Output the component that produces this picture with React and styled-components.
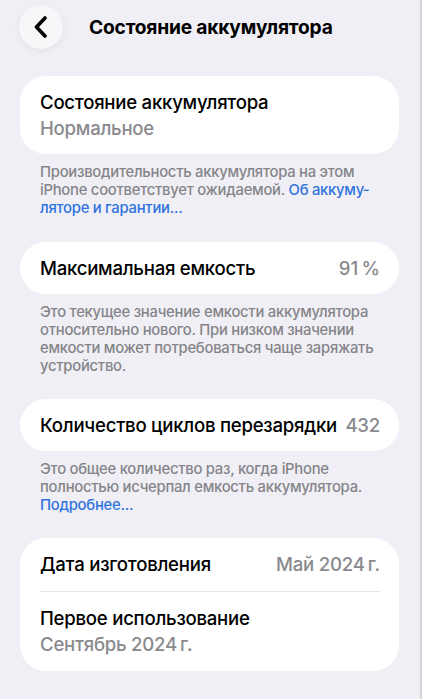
import React from 'react';
import styled, { createGlobalStyle } from 'styled-components';

const GlobalStyle = createGlobalStyle`
	html, body {
		margin: 0;
		padding: 0;
		background: #f0eff5;
	}
	body {
		font-family: Inter, 'Noto Sans', sans-serif;
		-webkit-font-smoothing: antialiased;
	}
`;

const Page = styled.div`
	width: 422px;
	min-height: 699px;
	box-sizing: border-box;
	padding: 5px 21px 0 20px;
	border-right: 2px solid #d6d6da;
	overflow: hidden;
`;

const Header = styled.header`
	display: flex;
	align-items: center;
	height: 44px;
	gap: 26px;
	margin-left: -1px;
`;

const BackButton = styled.button`
	width: 44px;
	height: 44px;
	border-radius: 50%;
	border: none;
	background: #f7f7fa;
	box-shadow: 0 2px 8px rgba(0, 0, 0, 0.06);
	display: flex;
	align-items: center;
	justify-content: center;
	padding: 0;
`;

const Title = styled.h1`
	margin: 0;
	font-size: 19.2px;
	font-weight: 700;
	color: #000;
	letter-spacing: -0.2px;
`;

const Card = styled.section`
	background: #fff;
	border-radius: 26px;
	padding: 0 19px 0 20px;
	margin-top: ${(p) => p.$top || 0}px;
`;

const Row = styled.div`
	display: flex;
	justify-content: space-between;
	align-items: center;
	height: ${(p) => p.$h || 52}px;
	border-bottom: ${(p) => (p.$divider ? '1px solid #e3e3e7' : 'none')};
`;

const Stack = styled.div`
	display: flex;
	flex-direction: column;
	justify-content: center;
	gap: 3px;
	height: ${(p) => p.$h || 78}px;
`;

const Label = styled.span`
	font-size: 18.6px;
	line-height: 23px;
	font-weight: 450;
	color: #000;
	letter-spacing: -0.25px;
`;

const Value = styled.span`
	font-size: 18.6px;
	line-height: 23px;
	font-weight: 450;
	color: #8a8a8e;
	letter-spacing: -0.25px;
	white-space: nowrap;
`;

const Footer = styled.p`
	margin: 9px 0 0;
	padding: 0 20px;
	font-size: 14.8px;
	line-height: 18px;
	font-weight: 450;
	color: #858589;
	letter-spacing: -0.25px;
`;

const Link = styled.a`
	color: #2f73e0;
	text-decoration: none;
`;

export default function App() {
	return (
		<>
			<GlobalStyle />
			<Page>
				<Header>
					<BackButton aria-label='Назад'>
						<svg width='16' height='22' viewBox='0 0 16 22'>
							<path
								d='M12 2 L3.5 11 L12 20'
								fill='none'
								stroke='#000'
								strokeWidth='3.6'
								strokeLinecap='round'
								strokeLinejoin='round'
							/>
						</svg>
					</BackButton>
					<Title>Состояние аккумулятора</Title>
				</Header>

				<Card $top={27}>
					<Stack $h={78}>
						<Label>Состояние аккумулятора</Label>
						<Value>Нормальное</Value>
					</Stack>
				</Card>
				<Footer>
					Производительность аккумулятора на этом iPhone соответствует
					ожидаемой. <Link href='#'>Об аккуму{'\u00AD'}ляторе и гарантии...</Link>
				</Footer>

				<Card $top={25}>
					<Row>
						<Label>Максимальная емкость</Label>
						<Value>91{'\u202F'}%</Value>
					</Row>
				</Card>
				<Footer>
					Это текущее значение емкости аккумулятора относительно нового.
					При низком значении емкости может потребоваться чаще заряжать
					устройство.
				</Footer>

				<Card $top={24}>
					<Row>
						<Label>Количество циклов перезарядки</Label>
						<Value>432</Value>
					</Row>
				</Card>
				<Footer>
					Это общее количество раз, когда iPhone полностью исчерпал емкость
					аккумулятора. <Link href='#'>Подробнее...</Link>
				</Footer>

				<Card $top={24}>
					<Row $h={53} $divider>
						<Label>Дата изготовления</Label>
						<Value>Май 2024{'\u202F'}г.</Value>
					</Row>
					<Stack $h={79}>
						<Label>Первое использование</Label>
						<Value>Сентябрь 2024{'\u202F'}г.</Value>
					</Stack>
				</Card>
			</Page>
		</>
	);
}
